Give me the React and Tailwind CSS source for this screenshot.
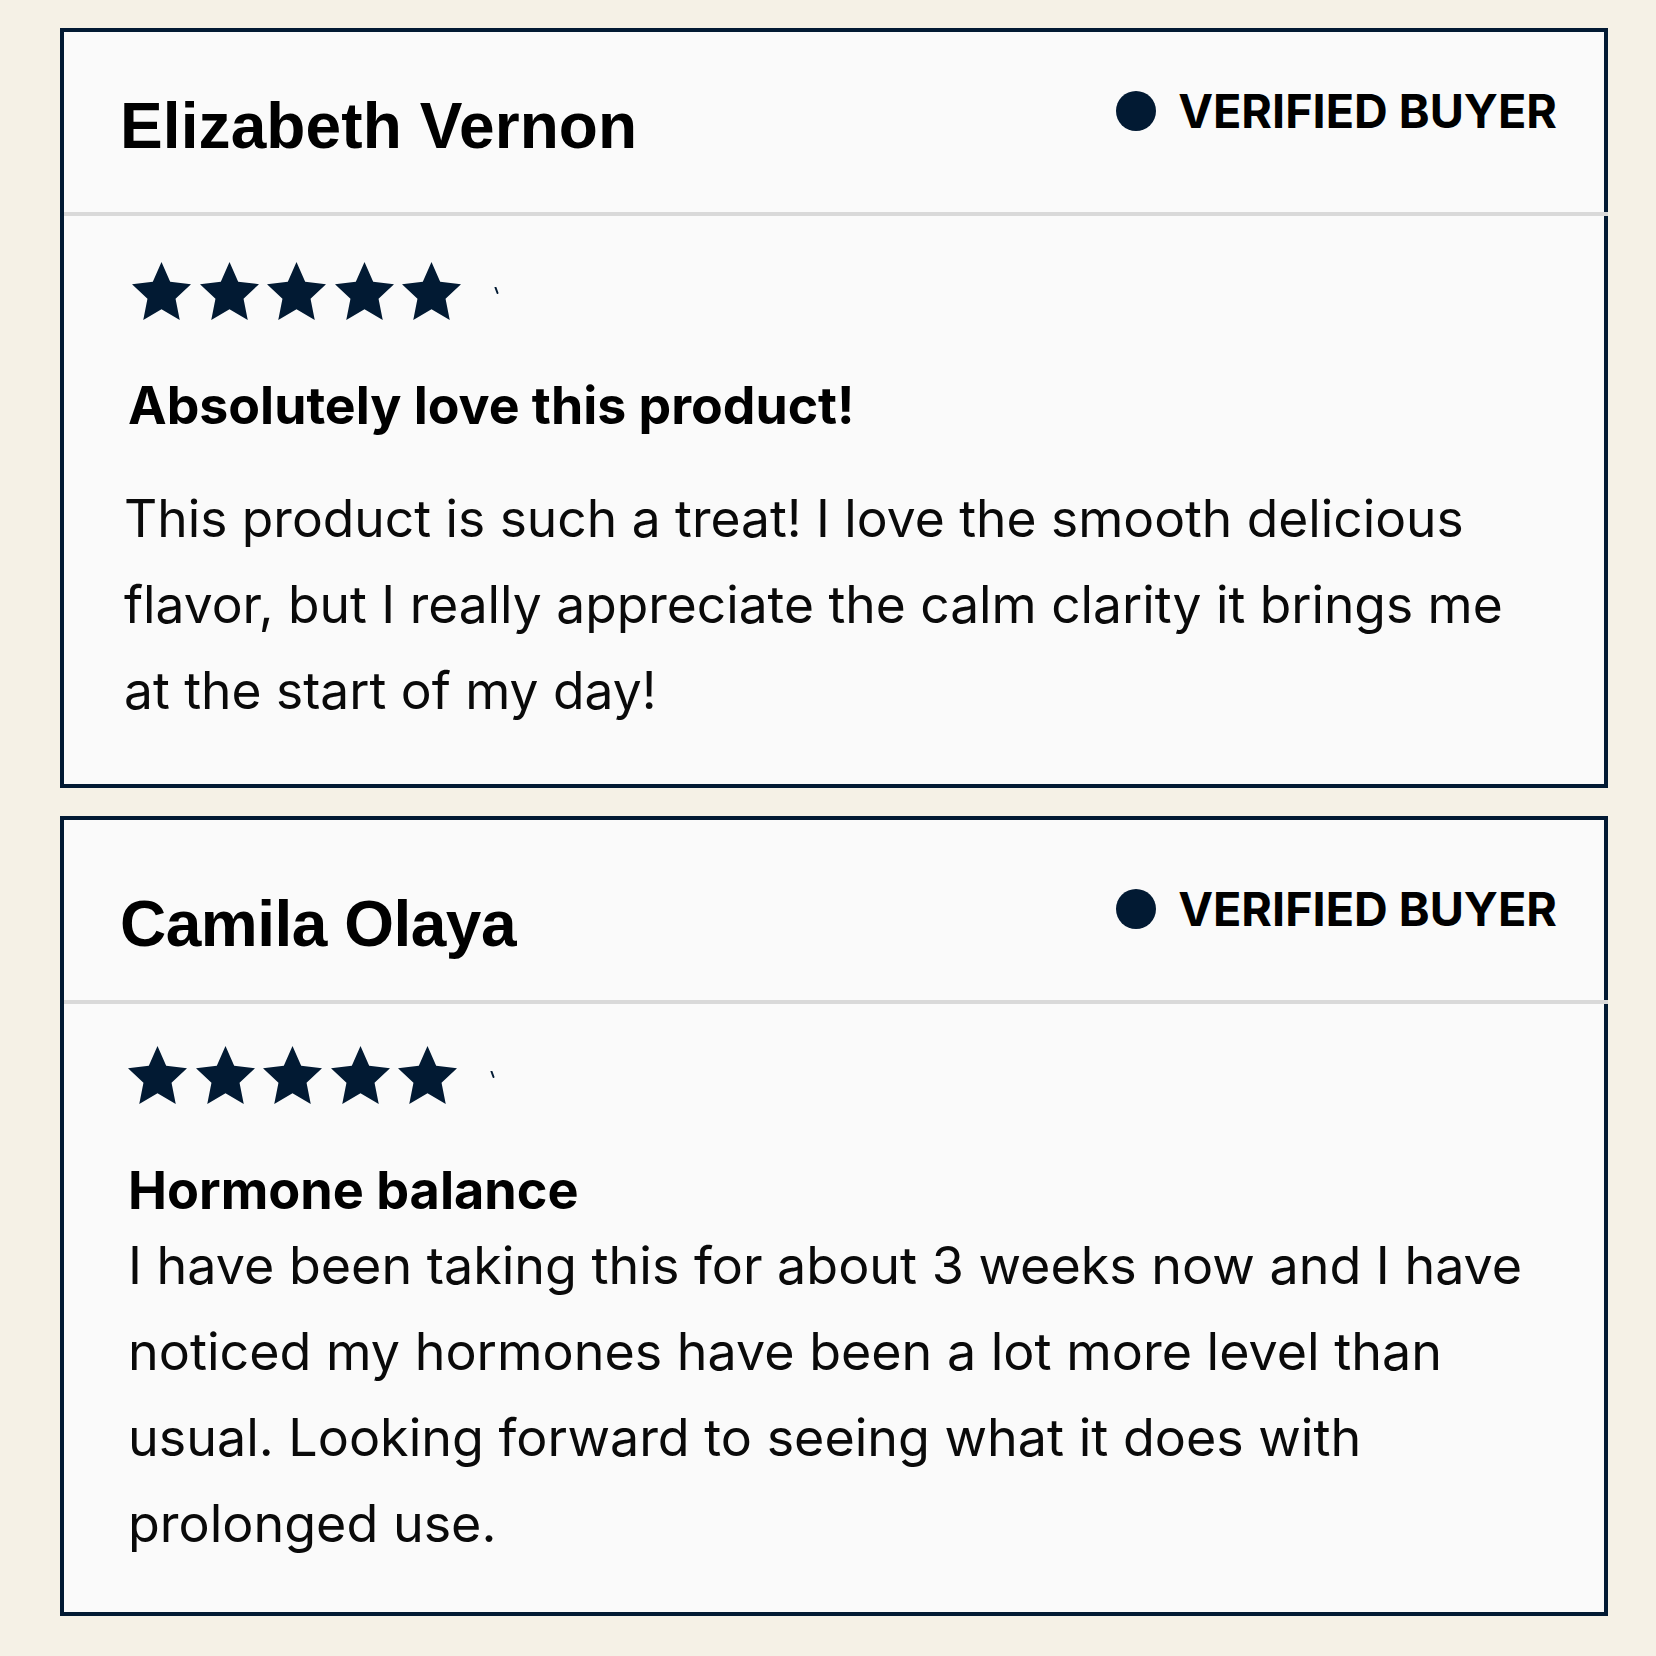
import React from "react";

function Star() {
  return (
    <svg width="59" height="58" viewBox="2 2 20 19.02" preserveAspectRatio="none" className="block shrink-0">
      <polygon
        points="12,2 14.94,8.46 22,9.27 16.76,14.04 18.18,21.02 12,17.5 5.82,21.02 7.24,14.04 2,9.27 9.06,8.46"
        fill="#021a33"
      />
    </svg>
  );
}

function Stars({ className, tickClass }) {
  return (
    <div className={"flex items-start gap-[8.5px] " + className}>
      <Star />
      <Star />
      <Star />
      <Star />
      <Star />
      <svg width="6" height="8" viewBox="0 0 6 8" className={"block shrink-0 " + tickClass}>
        <path d="M1.5 0.5 L3.5 6" stroke="#021a33" strokeWidth="2" strokeLinecap="round" />
      </svg>
    </div>
  );
}

function Header({ name, padTop, nameClass }) {
  return (
    <>
      <div className={"flex h-[180px] items-start justify-between pl-[56px] pr-[47px] " + padTop}>
        <div className={"mt-[6px] font-['Liberation_Sans',Arial,sans-serif] text-[64px] font-bold leading-none text-black " + nameClass}>
          {name}
        </div>
        <div className="flex items-center gap-[22px]">
          <div className="h-[40px] w-[40px] rounded-full bg-[#021a33]" />
          <div className="font-['Inter',sans-serif] text-[46.7px] font-bold leading-[46px] text-black">
            VERIFIED BUYER
          </div>
        </div>
      </div>
      <div className="relative z-10 -mr-[4px] h-[4px] bg-[#d9d9d9]" />
    </>
  );
}

export default function App() {
  return (
    <div className="min-h-screen bg-[#f5f1e6] pt-[28px] font-['Inter',sans-serif]">
      <div className="ml-[60px] flex w-[1548px] flex-col gap-[28px]">
        {/* Card 1 */}
        <div className="border-[4px] border-[#021a33] bg-[#fafafa]">
          <Header name="Elizabeth Vernon" padTop="pt-[56px]" nameClass="tracking-[0.1px]" />
          <div className="pl-[60px] pr-[40px] pt-[46px] pb-[51px]">
            <Stars className="ml-[8px]" tickClass="ml-[24px] mt-[25px]" />
            <div className="ml-[4px] mt-[60px] text-[51.8px] font-bold leading-none text-black">
              Absolutely love this product!
            </div>
            <div className="mt-[43px] text-[51.5px] leading-[86px] text-[#0a0a0a]">
              <span className="block whitespace-nowrap">This product is such a treat! I love the smooth delicious</span>
              <span className="block whitespace-nowrap">flavor, but I really appreciate the calm clarity it brings me</span>
              <span className="block whitespace-nowrap">at the start of my day!</span>
            </div>
          </div>
        </div>

        {/* Card 2 */}
        <div className="border-[4px] border-[#021a33] bg-[#fafafa]">
          <Header name="Camila Olaya" padTop="pt-[66px]" nameClass="tracking-[-0.5px]" />
          <div className="pl-[64px] pr-[40px] pt-[42.5px] pb-[45px]">
            <Stars className="" tickClass="ml-[24px] mt-[25px]" />
            <div className="mt-[60px] text-[52.2px] font-bold leading-none text-black">
              Hormone balance
            </div>
            <div className="mt-[6px] text-[52px] leading-[86px] text-[#0a0a0a]">
              <span className="block whitespace-nowrap">I have been taking this for about 3 weeks now and I have</span>
              <span className="block whitespace-nowrap">noticed my hormones have been a lot more level than</span>
              <span className="block whitespace-nowrap">usual. Looking forward to seeing what it does with</span>
              <span className="block whitespace-nowrap">prolonged use.</span>
            </div>
          </div>
        </div>
      </div>
    </div>
  );
}
